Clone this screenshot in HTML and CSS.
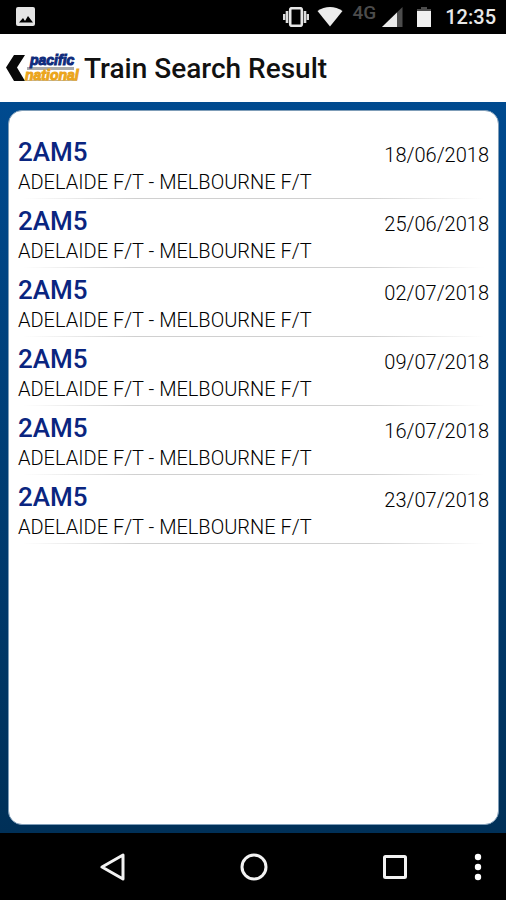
FILE: index.html
```html
<!DOCTYPE html>
<html lang="en">
<head>
<meta charset="utf-8">
<meta name="viewport" content="width=device-width, initial-scale=1">
<title>Train Search Result</title>
<link rel="stylesheet" href="styles.css">
</head>
<body>
<div class="status">
  <svg class="status-photo" width="20" height="20" viewBox="0 0 20 20" aria-hidden="true"><rect x="0" y="0" width="19" height="19" rx="2" fill="#e4e4e4"/><path d="M3 15.500l4-4.500 2 3 3-5 5 6.500z" fill="#000"/></svg>
  <div class="status-icons">
    <svg width="28" height="20" viewBox="0 0 28 20" aria-hidden="true"><rect x="8.200" y="1.200" width="11.600" height="17.600" rx="1.500" fill="none" stroke="#e6e6e6" stroke-width="2.600"/><path d="M5 4v12M23 4v12" stroke="#ddd" stroke-width="2.600"/><path d="M2.200 7v6M25.800 7v6" stroke="#ddd" stroke-width="2.400"/></svg>
    <svg class="wifi" width="26" height="20" viewBox="0 0 26 20" aria-hidden="true"><path d="M0.500 4C8-1.300 18-1.300 25.500 4L13 19.500z" fill="#ebebeb"/></svg>
    <span class="network">4G</span>
    <svg class="signal" width="21" height="20" viewBox="0 0 21 20" aria-hidden="true"><path d="M20.500 0v20H0z" fill="#4c4c4c"/><path d="M15 5.400V20H0z" fill="#ebebeb"/></svg>
    <svg class="battery" width="14" height="20" viewBox="0 0 14 20" aria-hidden="true"><path d="M4 0h6v2h4v3H0V2h4z" fill="#4c4c4c"/><path d="M0 4h14v16H0z" fill="#f0f0f0"/></svg>
  </div>
  <time class="clock">12:35</time>
</div>
<header class="header">
  <button class="back" aria-label="Back">
    <svg width="76" height="36" viewBox="0 0 76 36">
      <path d="M9 5h11l-8 12.500L20 31H9L1 17.500z" fill="#080808"/>
      <path d="M22 18.500h47" stroke="#aaa" stroke-width="3"/>
      <path d="M20 30.500h52" stroke="#c4b48c" stroke-width="1"/>
      <g class="brand"><text x="20" y="30" class="brand-national">national</text><text x="25" y="15" class="brand-pacific">pacific</text></g>
    </svg>
  </button>
  <h1 class="title">Train Search Result</h1>
</header>
<main class="main">
  <ul class="card">
    <li class="row"><h2 class="train">2AM5</h2><time class="date">18/06/2018</time><p class="route">ADELAIDE F/T - MELBOURNE F/T</p></li>
    <li class="row"><h2 class="train">2AM5</h2><time class="date">25/06/2018</time><p class="route">ADELAIDE F/T - MELBOURNE F/T</p></li>
    <li class="row"><h2 class="train">2AM5</h2><time class="date">02/07/2018</time><p class="route">ADELAIDE F/T - MELBOURNE F/T</p></li>
    <li class="row"><h2 class="train">2AM5</h2><time class="date">09/07/2018</time><p class="route">ADELAIDE F/T - MELBOURNE F/T</p></li>
    <li class="row"><h2 class="train">2AM5</h2><time class="date">16/07/2018</time><p class="route">ADELAIDE F/T - MELBOURNE F/T</p></li>
    <li class="row"><h2 class="train">2AM5</h2><time class="date">23/07/2018</time><p class="route">ADELAIDE F/T - MELBOURNE F/T</p></li>
  </ul>
</main>
<nav class="nav" aria-label="System">
  <button class="key" aria-label="Back"><svg width="28" height="28" viewBox="0 0 28 28"><path d="M24 2v24L3 14z" fill="none" stroke="#f2f2f2" stroke-width="3" stroke-linejoin="round"/></svg></button>
  <button class="key" aria-label="Home"><svg width="28" height="28" viewBox="0 0 28 28"><circle cx="14" cy="14" r="12" fill="none" stroke="#f2f2f2" stroke-width="3"/></svg></button>
  <button class="key" aria-label="Overview"><svg width="28" height="28" viewBox="0 0 28 28"><rect x="3.500" y="3.500" width="21" height="21" rx="1" fill="none" stroke="#f2f2f2" stroke-width="3"/></svg></button>
  <button class="key key-menu" aria-label="Menu"><svg width="8" height="28" viewBox="0 0 8 28"><g fill="#fff"><circle cx="4" cy="4" r="3.200"/><circle cx="4" cy="14" r="3.200"/><circle cx="4" cy="24" r="3.200"/></g></svg></button>
</nav>
</body>
</html>
```
FILE: styles.css
```css
* {
  box-sizing: border-box;
  margin: 0;
  padding: 0;
}

body {
  min-height: 100vh;
  display: flex;
  flex-direction: column;
  font-family: Roboto, "Liberation Sans", sans-serif;
  background: #000;
  color: #000;
}

svg {
  display: block;
}

button {
  border: 0;
  background: none;
}

.status {
  height: 34px;
  padding: 0 10px 0 16px;
  display: flex;
  align-items: center;
  background: #000;
  color: #e8e8e8;
}

.status-icons {
  margin-left: auto;
  display: flex;
  align-items: center;
}

.wifi {
  margin-left: 7px;
}

.network {
  margin: 0 6px 0 10px;
  padding-bottom: 8px;
  font-size: 19px;
  line-height: 20px;
  font-weight: 500;
  color: #4c4c4c;
}

.battery {
  margin: 0 14px;
}

.clock {
  font-size: 20px;
  line-height: 34px;
  font-weight: 500;
}

.header {
  height: 68px;
  padding-left: 5px;
  display: flex;
  align-items: center;
  gap: 3px;
  background: #fff;
}

.brand {
  font-family: "Liberation Sans", sans-serif;
  font-size: 14px;
  font-style: italic;
  font-weight: 700;
  stroke-width: 1px;
}

.brand-pacific {
  fill: #102c7c;
  stroke: #102c7c;
}

.brand-national {
  fill: #eba51c;
  stroke: #eba51c;
}

.title {
  font-size: 28px;
  line-height: 32px;
  padding-top: 2px;
  font-weight: 500;
  color: #111;
}

.main {
  flex: 1;
  display: flex;
  padding: 8px 7px 8px 8px;
  background: linear-gradient(#004a8f, #003058);
}

.card {
  flex: 1;
  padding: 19px 9px;
  border: 1px solid #7f9db8;
  border-radius: 14px;
  background: #fff;
  list-style: none;
}

.row {
  height: 69px;
  padding-top: 7px;
  display: grid;
  grid-template-columns: 1fr auto;
  grid-template-rows: 30px 30px;
  align-items: center;
  background: linear-gradient(90deg, transparent 1%, #d0d0d0 25%, #d0d0d0 75%, transparent 99%) bottom / 100% 1px no-repeat;
}

.train {
  font-size: 26px;
  line-height: 30px;
  font-weight: 500;
  color: #0a2580;
}

.date {
  padding-top: 6px;
  font-size: 20px;
  line-height: 24px;
  font-weight: 300;
}

.route {
  grid-column: 1 / -1;
  font-size: 20px;
  line-height: 30px;
  font-weight: 300;
}

.nav {
  height: 67px;
  padding: 0 24px 0 99px;
  display: flex;
  align-items: center;
  justify-content: space-between;
  background: #000;
}

.key-menu {
  margin-left: -48px;
}
```
